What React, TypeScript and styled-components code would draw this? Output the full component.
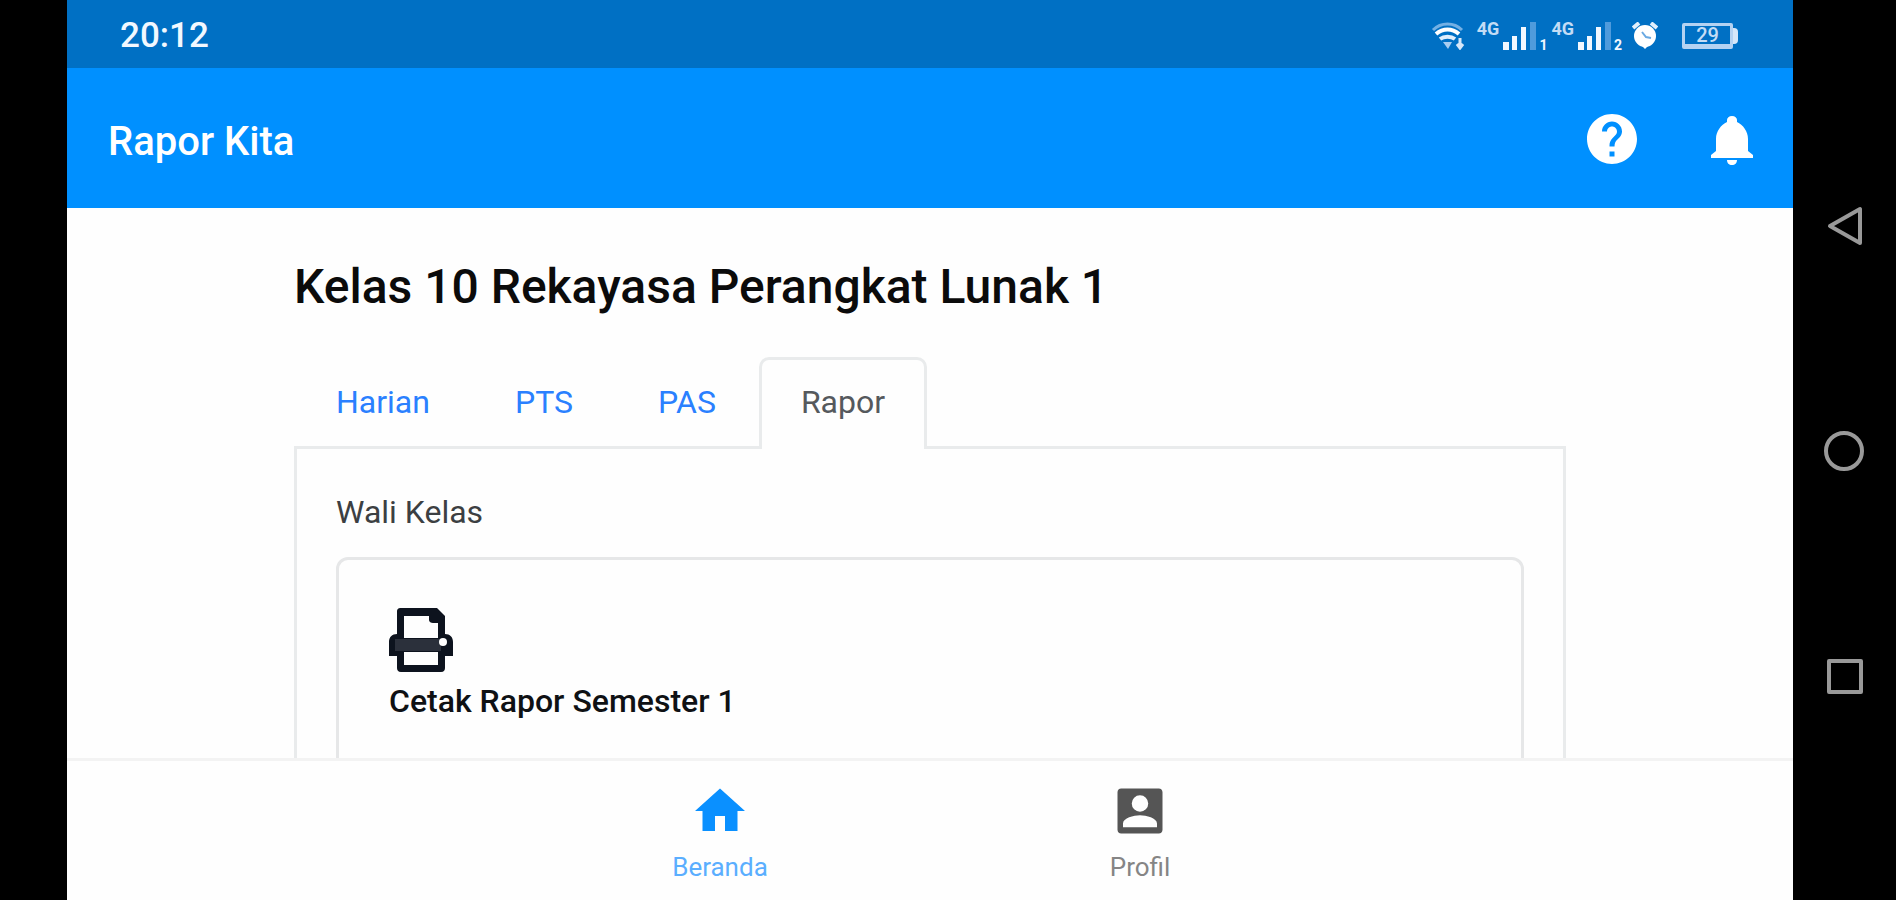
import React from "react";
import styled, { createGlobalStyle } from "styled-components";

const GlobalStyle = createGlobalStyle`
  *, *::before, *::after { box-sizing: border-box; }
  body {
    margin: 0;
    background: #000;
    color: #111;
    font-family: Roboto, "Liberation Sans", sans-serif;
    font-size: 32px;
    line-height: 48px;
  }
  button { font: inherit; color: inherit; background: none; border: 0; padding: 0; cursor: pointer; }
  a { color: inherit; text-decoration: none; }
  svg { display: block; }
`;

const Device = styled.div`
  display: grid;
  grid-template-columns: 67px minmax(0, 1fr) 103px;
  height: 100vh;
  background: #000;
`;

const Screen = styled.div`
  grid-column: 2;
  display: flex;
  flex-direction: column;
  min-height: 0;
  background: #fefefe;
`;

const StatusBar = styled.div`
  display: flex;
  flex: none;
  align-items: center;
  justify-content: space-between;
  height: 68px;
  padding: 4px 55px 0 53px;
  background: #0070c4;
  color: #f2f8ff;
`;

const Clock = styled.time`
  font-size: 35px;
  font-weight: 500;
`;

const StatusIcons = styled.div`
  display: flex;
  align-items: center;
`;

const Signals = styled.div`
  display: flex;
  margin-left: 8px;
`;

const SignalGroup = styled.div`
  display: flex;
  align-items: flex-end;
  height: 30px;
  margin-left: 4px;
`;

const NetworkType = styled.span`
  align-self: flex-start;
  font-size: 18px;
  font-weight: 700;
  line-height: 16px;
  margin-right: 4px;
  color: #c3dcf5;
`;

const SimIndex = styled.span`
  width: 8px;
  margin-left: 3px;
  font-size: 14px;
  font-weight: 700;
  line-height: 12px;
`;

const AlarmSlot = styled.div`
  margin: 0 24px 0 10px;
`;

const Battery = styled.div`
  display: flex;
  align-items: center;
`;

const BatteryCell = styled.span`
  display: flex;
  align-items: center;
  justify-content: center;
  width: 51px;
  height: 26px;
  border: 3px solid #b4d2f2;
  border-bottom-width: 5px;
  border-radius: 2px;
  font-size: 20px;
  font-weight: 500;
  line-height: 18px;
  color: #c3dcf5;
`;

const BatteryTip = styled.span`
  width: 5px;
  height: 16px;
  border-radius: 0 4px 4px 0;
  background: #d6e7f9;
`;

const AppBar = styled.header`
  display: flex;
  flex: none;
  align-items: center;
  justify-content: space-between;
  height: 140px;
  padding: 2px 31px 0 41px;
  background: #0090ff;
  color: #fff;
`;

const AppTitle = styled.div`
  padding-top: 6px;
  font-size: 40px;
  font-weight: 500;
`;

const AppActions = styled.div`
  display: flex;
  gap: 60px;
`;

const IconButton = styled.button`
  width: 60px;
  height: 60px;
`;

const Main = styled.main`
  flex: 1;
  min-height: 0;
  overflow: hidden;
`;

const Container = styled.div`
  width: 100%;
  max-width: 1272px;
  margin: 0 auto;
  padding-top: 51px;
`;

const Heading = styled.h1`
  margin: 0 0 42px;
  font-size: 48px;
  font-weight: 500;
  line-height: 56px;
  color: #0b0b0b;
`;

const TabList = styled.div`
  display: flex;
  gap: 1px;
  margin-bottom: -3px;
`;

const Tab = styled.button<{ $active?: boolean }>`
  position: relative;
  height: 92px;
  padding: 0 39px 6px;
  border: 3px solid ${(p) => (p.$active ? "#e9ebec" : "transparent")};
  border-bottom: 0;
  border-radius: 10px 10px 0 0;
  background: ${(p) => (p.$active ? "#fefefe" : "transparent")};
  color: ${(p) => (p.$active ? "#55595d" : "#2a80ff")};
`;

const Panel = styled.section`
  padding: 39px;
  border: 3px solid #e9ebec;
`;

const SectionLabel = styled.p`
  margin: 0 0 21px;
  color: #3c3f42;
`;

const Card = styled.a`
  display: block;
  min-height: 260px;
  padding: 48px 50px;
  border: 3px solid #e6e7e8;
  border-radius: 12px;
`;

const CardTitle = styled.h2`
  margin: 5px 0 0;
  font-size: 32px;
  font-weight: 500;
  color: #0f1114;
`;

const BottomNav = styled.nav`
  display: flex;
  flex: none;
  justify-content: center;
  height: 142px;
  padding-top: 20px;
  border-top: 3px solid #f3f3f3;
  background: #fefefe;
`;

const NavItem = styled.a<{ $active?: boolean }>`
  display: flex;
  flex-direction: column;
  align-items: center;
  width: 420px;
  color: ${(p) => (p.$active ? "#0a90ff" : "#555")};
`;

const NavLabel = styled.span<{ $active?: boolean }>`
  margin-top: 10px;
  font-size: 26px;
  line-height: 32px;
  color: ${(p) => (p.$active ? "#5aaeff" : "#858585")};
`;

const SystemNav = styled.div`
  display: flex;
  flex-direction: column;
  align-items: center;
  justify-content: space-around;
  padding: 113px 2px 111px 0;
  color: #999;
`;

const SystemButton = styled.button`
  width: 42px;
  height: 42px;
`;

const WifiIcon = () => (
  <svg width="34" height="28" viewBox="0 0 34 28" fill="none" aria-hidden="true">
    <path d="M2 8C10 0 23 0 31 8" stroke="#73b0e4" strokeWidth="3" />
    <path d="M5 12C12 6 21 6 28 12" stroke="#fff" strokeWidth="4" />
    <path d="M9 17C13 14 20 14 24 17" stroke="#e2effc" strokeWidth="4" />
    <path d="M12 20h9l-4 7z" fill="#a9cdf0" />
    <path d="M29 16v10M26 22l3 4 3-4" stroke="#d6e7f9" strokeWidth="3" />
  </svg>
);

const BarsIcon = () => (
  <svg width="33" height="30" viewBox="0 0 33 30" aria-hidden="true">
    <path d="M0 21h6v8H0zM9 15h5v14H9zM18 6h5v23h-5z" fill="#f2f8ff" />
    <path d="M27 1h6v28h-6z" fill="#4f9bdc" />
  </svg>
);

const AlarmIcon = () => (
  <svg width="26" height="28" viewBox="0 0 26 28" aria-hidden="true">
    <path d="M1 6L7 1M25 6l-6-5" stroke="#e2effc" strokeWidth="4" />
    <circle cx="13" cy="14" r="11" fill="#fff" />
    <path d="M10 10l4 5 5 1" stroke="#6aa9e2" strokeWidth="2" fill="none" />
    <path d="M10 24h6l-3 3z" fill="#fff" />
  </svg>
);

const HelpIcon = () => (
  <svg width="60" height="60" viewBox="0 0 24 24" fill="currentColor" aria-hidden="true">
    <path d="M12 2C6.48 2 2 6.48 2 12s4.48 10 10 10 10-4.48 10-10S17.52 2 12 2zm1 17h-2v-2h2v2zm2.07-7.75l-.9.92C13.45 12.9 13 13.5 13 15h-2v-.5c0-1.1.45-2.1 1.17-2.83l1.24-1.26c.37-.36.59-.86.59-1.41 0-1.1-.9-2-2-2s-2 .9-2 2H8c0-2.21 1.79-4 4-4s4 1.79 4 4c0 .88-.36 1.68-.93 2.25z" />
  </svg>
);

const BellIcon = () => (
  <svg width="60" height="60" viewBox="0 0 60 60" fill="currentColor" aria-hidden="true">
    <path d="M30 7c-3 0-5 2-5 4v2c-6 3-11 9-11 17v12l-5 4v3h42v-3l-5-4V30c0-8-5-14-11-17v-2c0-2-2-4-5-4zM25 51h10c0 3-2 5-5 5s-5-2-5-5z" />
  </svg>
);

const PrinterIcon = () => (
  <svg width="64" height="64" viewBox="0 0 64 64" aria-hidden="true">
    <path
      fill="#0d131e"
      fillRule="evenodd"
      d="M12 0h36l8 8v18c5 0 8 3 8 8v14h-8v12c0 2-1 4-4 4H12c-3 0-4-2-4-4V48H0V34c0-5 3-8 8-8V4c0-3 1-4 4-4zM15 8v22h34V15h-5c-2 0-4-1-4-3V8zM15 44v13h34V44z"
    />
    <path d="M6 31h46v12H6z" fill="#2b303b" />
    <circle cx="54" cy="34" r="4" fill="#fefefe" />
  </svg>
);

const HomeIcon = () => (
  <svg width="60" height="60" viewBox="0 0 24 24" fill="currentColor" aria-hidden="true">
    <path d="M10 20v-6h4v6h5v-8h3L12 3 2 12h3v8z" />
  </svg>
);

const ProfileIcon = () => (
  <svg width="60" height="60" viewBox="0 0 24 24" fill="currentColor" aria-hidden="true">
    <path
      fillRule="evenodd"
      d="M4.500 3h15c.9 0 1.500.6 1.500 1.500v15c0 .9-.6 1.500-1.500 1.500h-15C3.600 21 3 20.400 3 19.500v-15C3 3.600 3.600 3 4.500 3zM12 5.700a3.300 3.300 0 1 0 0 6.600 3.300 3.300 0 0 0 0-6.600zM5.200 18.500h13.600V17c0-2.200-4.300-3.300-6.800-3.300S5.200 14.800 5.200 17z"
    />
  </svg>
);

const Signal = ({ sim }: { sim: number }) => (
  <SignalGroup>
    <NetworkType>4G</NetworkType>
    <BarsIcon />
    <SimIndex>{sim}</SimIndex>
  </SignalGroup>
);

export default function App() {
  return (
    <>
      <GlobalStyle />
      <Device>
        <Screen>
          <StatusBar>
            <Clock>20:12</Clock>
            <StatusIcons>
              <WifiIcon />
              <Signals>
                <Signal sim={1} />
                <Signal sim={2} />
              </Signals>
              <AlarmSlot>
                <AlarmIcon />
              </AlarmSlot>
              <Battery>
                <BatteryCell>29</BatteryCell>
                <BatteryTip />
              </Battery>
            </StatusIcons>
          </StatusBar>
          <AppBar>
            <AppTitle>Rapor Kita</AppTitle>
            <AppActions>
              <IconButton aria-label="Bantuan">
                <HelpIcon />
              </IconButton>
              <IconButton aria-label="Notifikasi">
                <BellIcon />
              </IconButton>
            </AppActions>
          </AppBar>
          <Main>
            <Container>
              <Heading>Kelas 10 Rekayasa Perangkat Lunak 1</Heading>
              <TabList role="tablist">
                <Tab role="tab" aria-selected={false}>Harian</Tab>
                <Tab role="tab" aria-selected={false}>PTS</Tab>
                <Tab role="tab" aria-selected={false}>PAS</Tab>
                <Tab role="tab" aria-selected $active>Rapor</Tab>
              </TabList>
              <Panel role="tabpanel">
                <SectionLabel>Wali Kelas</SectionLabel>
                <Card href="#cetak">
                  <PrinterIcon />
                  <CardTitle>Cetak Rapor Semester 1</CardTitle>
                </Card>
              </Panel>
            </Container>
          </Main>
          <BottomNav>
            <NavItem href="#beranda" $active>
              <HomeIcon />
              <NavLabel $active>Beranda</NavLabel>
            </NavItem>
            <NavItem href="#profil">
              <ProfileIcon />
              <NavLabel>Profil</NavLabel>
            </NavItem>
          </BottomNav>
        </Screen>
        <SystemNav>
          <SystemButton aria-label="Kembali">
            <svg width="42" height="42" viewBox="0 0 42 42" fill="none" stroke="currentColor" strokeWidth="4" strokeLinejoin="round">
              <path d="M37 4v34L7 21z" />
            </svg>
          </SystemButton>
          <SystemButton aria-label="Layar utama">
            <svg width="42" height="42" viewBox="0 0 42 42" fill="none" stroke="currentColor" strokeWidth="4">
              <circle cx="21" cy="21" r="18" />
            </svg>
          </SystemButton>
          <SystemButton aria-label="Aplikasi terbaru">
            <svg width="42" height="42" viewBox="0 0 42 42" fill="none" stroke="currentColor" strokeWidth="4" strokeLinejoin="round">
              <rect x="6" y="6" width="32" height="31" />
            </svg>
          </SystemButton>
        </SystemNav>
      </Device>
    </>
  );
}
